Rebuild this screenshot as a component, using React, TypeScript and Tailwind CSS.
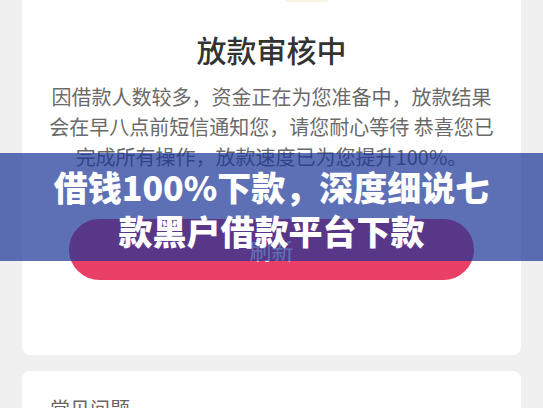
import React from "react";

export default function App() {
  const cjk = { fontFamily: '"Noto Sans CJK SC", "Noto Sans", sans-serif' };
  return (
    <div
      className="relative h-[408px] w-[543px] overflow-hidden bg-[#f0f0f0] px-[22px]"
      style={cjk}
    >
      <div className="relative rounded-b-[8px] bg-white pb-[75px] pt-[29px]">
        <div className="absolute left-[262px] top-[-8px] h-[10px] w-[46px] rounded-full bg-[#f8f6e2]" />
        <h1 className="text-center text-[30px] leading-[40px] font-medium text-[#333333]">
          放款审核中
        </h1>
        <p className="mt-[13px] text-center text-[20px] leading-[30px] text-[#6a6a6a]">
          因借款人数较多，资金正在为您准备中，放款结果
          <br />
          会在早八点前短信通知您，请您耐心等待 恭喜您已
          <br />
          完成所有操作，放款速度已为您提升100%。
        </p>
        <div className="mt-[47px] flex justify-center">
          <button className="flex h-[61px] w-[405px] items-center justify-center rounded-full bg-[#ea4068] text-[22px] text-white">
            刷新
          </button>
        </div>
      </div>
      <div className="mt-[16px] flex h-[60px] items-start justify-between rounded-t-[8px] bg-white pl-[28px] pr-[24px] pt-[24px]">
        <span className="text-[20px] leading-[28px] text-[#666666]">常见问题</span>
        <svg width="12" height="20" viewBox="0 0 12 20" className="mt-[12px]">
          <path d="M2 2 L10 10 L2 18" fill="none" stroke="#bbbbbb" strokeWidth="2" />
        </svg>
      </div>
      <div className="absolute left-0 top-[153px] flex h-[108px] w-[543px] flex-col items-center justify-center bg-[rgba(25,51,149,0.7)] pt-[4px]">
        <div className="text-center text-[34px] font-black leading-[44px] text-white">
          借钱100%下款，深度细说七
        </div>
        <div className="text-center text-[34px] font-black leading-[44px] text-white">
          款黑户借款平台下款
        </div>
      </div>
    </div>
  );
}
